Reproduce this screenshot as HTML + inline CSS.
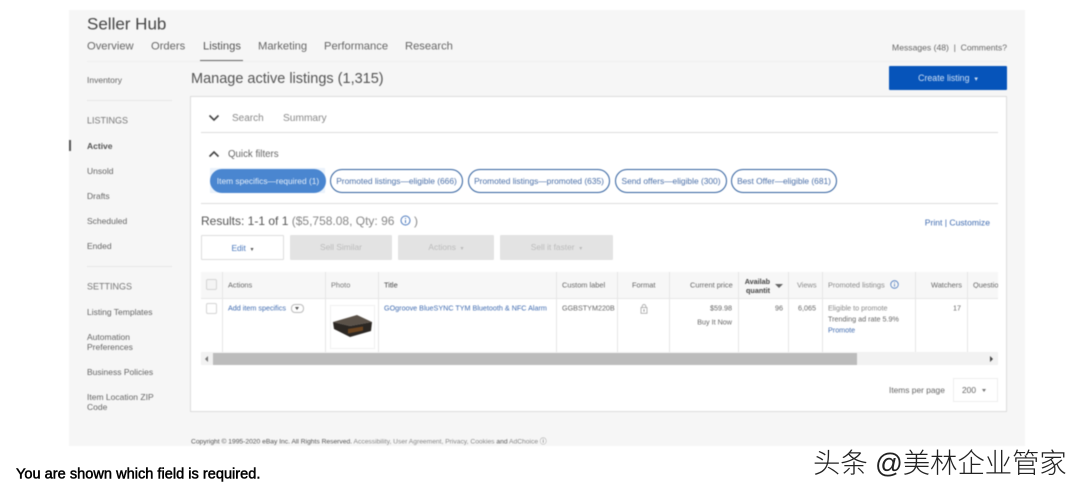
<!DOCTYPE html>
<html lang="en">
<head>
<meta charset="utf-8">
<style>
html,body{margin:0;padding:0;background:#fff;}
body{width:1080px;height:493px;overflow:hidden;position:relative;font-family:"Liberation Sans",Arial,sans-serif;color:#555;}
#app{position:absolute;left:0;top:0;width:1080px;height:493px;filter:blur(.4px);}
.a{position:absolute;white-space:nowrap;line-height:1;}
.b{position:absolute;}
.c{transform:translateY(-50%);}
.side{font-size:8.5px;color:#666;left:87px;}
.tab{font-size:11.2px;color:#666;top:47px;}
.pill{position:absolute;top:169px;height:22px;border:1px solid #2f5f9e;border-radius:12px;background:#fff;color:#4a6fa8;font-size:8.4px;line-height:22px;text-align:center;white-space:nowrap;}
.btn{position:absolute;top:235px;height:25px;background:#e3e3e3;color:#bbb;font-size:8.4px;line-height:25px;text-align:center;border-radius:1px;}
.th{font-size:7.4px;color:#666;top:285px;}
.td{font-size:7.2px;color:#666;}
.link{color:#3f6bb0 !important;}
.vl{position:absolute;top:272px;height:80px;width:1px;background:#e6e6e6;}
.cb{position:absolute;width:9px;height:9px;border:1px solid #d4d4d4;border-radius:2px;background:#fff;left:206px;}
.hr{position:absolute;height:1px;background:#dcdcdc;}
</style>
</head>
<body>
<div id="app">
  <div class="b" style="left:69px;top:10px;width:956px;height:436px;background:#f6f6f6;"></div>
  <div class="hr" style="left:87px;top:61px;width:920px;background:#efefef;"></div>

  <div class="a c" style="left:87px;top:23.5px;font-size:17px;color:#444;">Seller Hub</div>
  <div class="a c tab" style="left:87px;">Overview</div>
  <div class="a c tab" style="left:151px;">Orders</div>
  <div class="a c tab" style="left:203px;color:#555;">Listings</div>
  <div class="a c tab" style="left:258px;">Marketing</div>
  <div class="a c tab" style="left:324px;">Performance</div>
  <div class="a c tab" style="left:405px;">Research</div>
  <div class="b" style="left:200px;top:59.5px;width:43px;height:1.5px;background:#666;"></div>
  <div class="a c" style="right:73px;top:48px;font-size:8.6px;color:#666;">Messages (48) &nbsp;|&nbsp; Comments?</div>

  <div class="a c side" style="top:79.5px;">Inventory</div>
  <div class="hr" style="left:87px;top:100px;width:85px;background:#e6e6e6;"></div>
  <div class="a c side" style="top:121px;font-size:9px;color:#777;">LISTINGS</div>
  <div class="b" style="left:69px;top:140px;width:2px;height:11px;background:#555;"></div>
  <div class="a c side" style="top:146px;font-weight:bold;color:#555;">Active</div>
  <div class="a c side" style="top:171px;">Unsold</div>
  <div class="a c side" style="top:196px;">Drafts</div>
  <div class="a c side" style="top:221px;">Scheduled</div>
  <div class="a c side" style="top:246px;">Ended</div>
  <div class="hr" style="left:87px;top:266px;width:85px;background:#e6e6e6;"></div>
  <div class="a c side" style="top:287px;font-size:9px;color:#777;">SETTINGS</div>
  <div class="a c side" style="top:312px;">Listing Templates</div>
  <div class="a c side" style="top:337px;">Automation</div>
  <div class="a c side" style="top:347px;">Preferences</div>
  <div class="a c side" style="top:372px;">Business Policies</div>
  <div class="a c side" style="top:397px;">Item Location ZIP</div>
  <div class="a c side" style="top:407px;">Code</div>

  <div class="a c" style="left:191px;top:79px;font-size:14.5px;color:#555;">Manage active listings (1,315)</div>
  <div class="b" style="left:889px;top:66px;width:118px;height:24px;background:#0654ba;border-radius:1px;color:#cfe0f5;font-size:8.8px;line-height:24px;text-align:center;">Create listing &nbsp;<span style="font-size:7px;">▾</span></div>

  <div class="b" style="left:190px;top:96px;width:815px;height:314px;background:#fff;border:1px solid #dcdcdc;"></div>

  <svg class="b" style="left:208px;top:114px;" width="12" height="8" viewBox="0 0 12 8"><path d="M1.5 1.5 L6 6 L10.5 1.5" fill="none" stroke="#444" stroke-width="1.6"/></svg>
  <div class="a c" style="left:232px;top:119px;font-size:10px;color:#888;">Search</div>
  <div class="a c" style="left:283px;top:119px;font-size:10.2px;color:#888;">Summary</div>
  <div class="hr" style="left:201px;top:132px;width:797px;"></div>

  <svg class="b" style="left:208px;top:150px;" width="12" height="8" viewBox="0 0 12 8"><path d="M1.5 6.5 L6 2 L10.5 6.5" fill="none" stroke="#444" stroke-width="1.6"/></svg>
  <div class="a c" style="left:228px;top:154.5px;font-size:9.7px;color:#666;">Quick filters</div>

  <div class="b" style="left:210px;top:168px;width:115px;height:25px;background:#eaf2fb;"></div>
  <div class="pill" style="left:210px;width:114px;background:#4a86d0;border-color:#4a86d0;color:#e4eefa;">Item specifics—required (1)</div>
  <div class="pill" style="left:330px;width:131px;">Promoted listings—eligible (666)</div>
  <div class="pill" style="left:468px;width:140px;">Promoted listings—promoted (635)</div>
  <div class="pill" style="left:615px;width:110px;">Send offers—eligible (300)</div>
  <div class="pill" style="left:731px;width:104px;">Best Offer—eligible (681)</div>
  <div class="hr" style="left:201px;top:203px;width:797px;"></div>

  <div class="a c" style="left:201px;top:221px;font-size:12px;color:#666;"><span style="color:#555;">Results: 1-1 of 1</span> <span style="color:#888;">($5,758.08, Qty: 96</span></div>
  <svg class="b" style="left:400px;top:215px;" width="11" height="11" viewBox="0 0 11 11"><circle cx="5.5" cy="5.5" r="4.5" fill="none" stroke="#4a78bd" stroke-width="1"/><path d="M5.5 5v3M5.5 3v1" stroke="#4a78bd" stroke-width="1"/></svg>
  <div class="a c" style="left:414px;top:221px;font-size:12px;color:#888;">)</div>
  <div class="a c link" style="right:90px;top:222.5px;font-size:8.6px;">Print | Customize</div>

  <div class="btn" style="left:201px;width:81px;height:23px;line-height:24px;background:#fff;border:1px solid #dcdcdc;color:#4a78bd;">Edit &nbsp;<span style="font-size:6px;color:#555;">▾</span></div>
  <div class="btn" style="left:290px;width:102px;">Sell Similar</div>
  <div class="btn" style="left:398px;width:96px;">Actions &nbsp;<span style="font-size:6px;">▾</span></div>
  <div class="btn" style="left:500px;width:113px;">Sell it faster &nbsp;<span style="font-size:6px;">▾</span></div>

  <!-- table -->
  <div class="b" style="left:201px;top:272px;width:797px;height:26px;background:#f7f7f7;"></div>
  <div class="hr" style="left:201px;top:298px;width:797px;background:#e6e6e6;"></div>
  <div class="vl" style="left:222px;"></div>
  <div class="vl" style="left:325px;"></div>
  <div class="vl" style="left:378px;"></div>
  <div class="vl" style="left:556px;"></div>
  <div class="vl" style="left:617px;"></div>
  <div class="vl" style="left:669px;"></div>
  <div class="vl" style="left:738px;"></div>
  <div class="vl" style="left:788px;"></div>
  <div class="vl" style="left:822px;"></div>
  <div class="vl" style="left:915px;"></div>
  <div class="vl" style="left:967px;"></div>

  <div class="cb" style="top:279px;background:#f4f4f4;"></div>
  <div class="cb" style="top:303px;"></div>

  <div class="a c th" style="left:228px;">Actions</div>
  <div class="a c th" style="left:331px;color:#777;">Photo</div>
  <div class="a c th" style="left:384px;color:#444;">Title</div>
  <div class="a c th" style="left:562px;">Custom label</div>
  <div class="a c th" style="left:632px;">Format</div>
  <div class="a c th" style="left:690px;">Current price</div>
  <div class="a" style="left:740px;top:277px;width:30px;font-size:7.2px;line-height:9px;font-weight:bold;color:#444;text-align:right;overflow:hidden;">Availab<br>quantit</div>
  <div class="b" style="left:775px;top:284px;width:0;height:0;border-left:4px solid transparent;border-right:4px solid transparent;border-top:4px solid #666;"></div>
  <div class="a c th" style="left:797px;color:#888;">Views</div>
  <div class="a c th" style="left:828px;color:#888;">Promoted listings</div>
  <svg class="b" style="left:890px;top:280px;" width="9" height="9" viewBox="0 0 9 9"><circle cx="4.5" cy="4.5" r="3.8" fill="none" stroke="#4a78bd" stroke-width=".8"/><path d="M4.5 4v2.6M4.5 2.2v1" stroke="#4a78bd" stroke-width=".8"/></svg>
  <div class="a c th" style="left:931px;">Watchers</div>
  <div class="a c th" style="left:973px;width:25px;overflow:hidden;">Questions</div>

  <div class="a c td link" style="left:228px;top:308px;">Add item specifics</div>
  <div class="b" style="left:291px;top:304px;width:11px;height:7px;border:1px solid #bbb;border-radius:4px;background:#fff;"></div>
  <div class="b" style="left:295px;top:307px;width:0;height:0;border-left:2.5px solid transparent;border-right:2.5px solid transparent;border-top:3px solid #555;"></div>

  <div class="b" style="left:330px;top:305px;width:43px;height:42px;border:1px solid #f0f0f0;background:#fff;"></div>
  <svg class="b" style="left:331px;top:312px;" width="43" height="28" viewBox="0 0 43 28">
    <path d="M2 10 L26 3 L41 10 L19 14 Z" fill="#5a5148"/>
    <path d="M2 10 L19 14 L41 10 L40 19 L19 25 L3 17 Z" fill="#2b2723"/>
    <path d="M17 17 L32 14.5 L32 18.5 L17 21.5 Z" fill="#6b4420"/>
  </svg>

  <div class="a c td link" style="left:384px;top:308px;">GOgroove BlueSYNC TYM Bluetooth &amp; NFC Alarm</div>
  <div class="a c td" style="left:562px;top:308px;">GGBSTYM220B</div>
  <svg class="b" style="left:639.5px;top:304px;" width="8" height="10" viewBox="0 0 8 10"><rect x="1" y="3.5" width="6" height="5.8" fill="none" stroke="#999" stroke-width=".7"/><path d="M2.2 3.5V2.3a1.8 1.8 0 0 1 3.6 0V3.5" fill="none" stroke="#999" stroke-width=".7"/><path d="M4 5.2v2.4" stroke="#888" stroke-width=".9"/></svg>
  <div class="a c td" style="right:348px;top:308px;">$59.98</div>
  <div class="a c td" style="right:348px;top:322px;">Buy It Now</div>
  <div class="a c td" style="right:297px;top:308px;">96</div>
  <div class="a c td" style="right:264px;top:308px;">6,065</div>
  <div class="a c td" style="left:828px;top:308px;color:#888;">Eligible to promote</div>
  <div class="a c td" style="left:828px;top:319px;">Trending ad rate 5.9%</div>
  <div class="a c td link" style="left:828px;top:330px;">Promote</div>
  <div class="a c td" style="right:119px;top:308px;">17</div>

  <!-- scrollbar -->
  <div class="b" style="left:201px;top:352px;width:797px;height:13px;background:#f2f2f2;"></div>
  <div class="b" style="left:213px;top:353px;width:644px;height:12px;background:#bcbcbc;"></div>
  <div class="b" style="left:205px;top:356px;width:0;height:0;border-top:3px solid transparent;border-bottom:3px solid transparent;border-right:3px solid #777;"></div>
  <div class="b" style="left:990px;top:356px;width:0;height:0;border-top:3px solid transparent;border-bottom:3px solid transparent;border-left:3px solid #444;"></div>

  <div class="a c" style="left:889px;top:390px;font-size:8.4px;color:#666;">Items per page</div>
  <div class="b" style="left:953px;top:378px;width:43px;height:22px;border:1px solid #eee;background:#fff;"></div>
  <div class="a c" style="left:962px;top:390px;font-size:8.4px;color:#666;">200</div>
  <div class="b" style="left:982px;top:389px;width:0;height:0;border-left:2.5px solid transparent;border-right:2.5px solid transparent;border-top:3px solid #777;"></div>

  <div class="a c" style="left:191px;top:442.5px;font-size:6.7px;color:#555;">Copyright © 1995-2020 eBay Inc. All Rights Reserved. <span style="color:#888;">Accessibility, User Agreement, Privacy, Cookies</span> and <span style="color:#888;">AdChoice</span> ⓘ</div>
</div>

<div class="a c" style="left:16px;top:475px;font-size:14.6px;color:#000;-webkit-text-stroke:.5px #000;">You are shown which field is required.</div>
<div class="a c" style="left:813px;top:463px;font-size:27.5px;color:#222;font-family:'Liberation Sans','Noto Sans CJK SC',sans-serif;font-weight:300;letter-spacing:-.2px;">头条 @美林企业管家</div>
</body>
</html>
